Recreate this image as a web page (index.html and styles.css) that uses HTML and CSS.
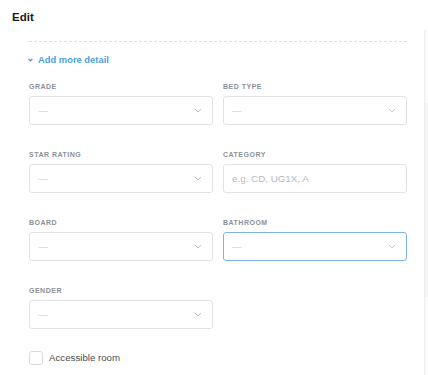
FILE: index.html
```html
<!DOCTYPE html>
<html>
<head>
<meta charset="utf-8">
<link rel="stylesheet" href="styles.css">
</head>
<body>
<div class="page">
  <main class="main">
    <h1 class="title">Edit</h1>
    <div class="content">
      <div class="divider"></div>
      <button class="toggle" type="button">
        <svg class="toggle-icon" width="5" height="4" viewBox="0 0 5 4"><polyline points="0.6,1 2.5,2.8 4.4,1" fill="none" stroke="#4a9fd8" stroke-width="1.2"/></svg>
        <span>Add more detail</span>
      </button>
      <div class="grid">
        <div class="field">
          <div class="label">GRADE</div>
          <div class="box"><span class="dash">—</span><svg class="chev" width="8" height="5" viewBox="0 0 8 5"><polyline points="0.8,0.8 4,4 7.2,0.8" fill="none" stroke="#b9bcc0" stroke-width="0.9"/></svg></div>
        </div>
        <div class="field">
          <div class="label">BED TYPE</div>
          <div class="box"><span class="dash">—</span><svg class="chev" width="8" height="5" viewBox="0 0 8 5"><polyline points="0.8,0.8 4,4 7.2,0.8" fill="none" stroke="#b9bcc0" stroke-width="0.9"/></svg></div>
        </div>
        <div class="field">
          <div class="label">STAR RATING</div>
          <div class="box"><span class="dash">—</span><svg class="chev" width="8" height="5" viewBox="0 0 8 5"><polyline points="0.8,0.8 4,4 7.2,0.8" fill="none" stroke="#b9bcc0" stroke-width="0.9"/></svg></div>
        </div>
        <div class="field">
          <div class="label">CATEGORY</div>
          <div class="box"><span class="placeholder">e.g. CD, UG1X, A</span></div>
        </div>
        <div class="field">
          <div class="label">BOARD</div>
          <div class="box"><span class="dash">—</span><svg class="chev" width="8" height="5" viewBox="0 0 8 5"><polyline points="0.8,0.8 4,4 7.2,0.8" fill="none" stroke="#b9bcc0" stroke-width="0.9"/></svg></div>
        </div>
        <div class="field">
          <div class="label">BATHROOM</div>
          <div class="box focus"><span class="dash">—</span><svg class="chev" width="8" height="5" viewBox="0 0 8 5"><polyline points="0.8,0.8 4,4 7.2,0.8" fill="none" stroke="#b9bcc0" stroke-width="0.9"/></svg></div>
        </div>
        <div class="field">
          <div class="label">GENDER</div>
          <div class="box"><span class="dash">—</span><svg class="chev" width="8" height="5" viewBox="0 0 8 5"><polyline points="0.8,0.8 4,4 7.2,0.8" fill="none" stroke="#b9bcc0" stroke-width="0.9"/></svg></div>
        </div>
      </div>
      <label class="check">
        <span class="checkbox"></span>
        <span class="check-text">Accessible room</span>
      </label>
    </div>
  </main>
  <aside class="rail"><div class="thumb"></div></aside>
</div>
</body>
</html>
```

FILE: styles.css
```css
html, body {
  margin: 0;
  padding: 0;
  background: #ffffff;
}
body {
  font-family: "Liberation Sans", Arial, sans-serif;
  color: #222;
}
.page {
  display: flex;
  width: 428px;
  height: 375px;
  overflow: hidden;
}
.main {
  width: 424px;
  flex: none;
}
.rail {
  flex: 1;
  margin-top: 30px;
  border-left: 1px solid #ececec;
  background: #fbfbfb;
  display: flex;
  flex-direction: column;
}
.thumb {
  margin-top: 73px;
  height: 194px;
  background: #f4f4f4;
}
.title {
  margin: 0;
  padding: 9px 12px 0;
  font-size: 11.5px;
  line-height: 16px;
  font-weight: 700;
  color: #1a1a1a;
}
.content {
  margin-left: 29px;
  width: 378px;
}
.divider {
  margin-top: 16px;
  border-top: 1px dashed #dcdcdc;
}
.toggle {
  display: flex;
  align-items: center;
  gap: 5px;
  margin-top: 11px;
  padding: 0;
  border: 0;
  background: none;
  font-family: inherit;
  font-size: 9.4px;
  line-height: 14px;
  font-weight: 700;
  color: #4a9fd8;
  cursor: pointer;
}
.toggle-icon {
  display: block;
  margin-left: -1px;
}
.grid {
  margin-top: 14px;
  display: grid;
  grid-template-columns: 184px 184px;
  column-gap: 10px;
  row-gap: 24px;
}
.label {
  font-size: 7px;
  line-height: 11px;
  font-weight: 700;
  letter-spacing: 0.5px;
  color: #8b9199;
  margin-bottom: 4px;
}
.box {
  box-sizing: border-box;
  height: 29px;
  border: 1px solid #e2e3e5;
  border-radius: 3px;
  display: flex;
  align-items: center;
  justify-content: space-between;
  padding: 0 10px 0 8px;
}
.box.focus {
  border-color: #7fb6df;
}
.dash {
  font-size: 10px;
  color: #dadbdd;
  transform: scaleX(0.95);
}
.placeholder {
  font-size: 9.8px;
  color: #b7b9bc;
}
.chev {
  display: block;
}
.check {
  margin-top: 22px;
  display: flex;
  align-items: center;
  gap: 6px;
}
.checkbox {
  box-sizing: border-box;
  width: 14px;
  height: 14px;
  border: 1px solid #d9dadc;
  border-radius: 3px;
  background: #fff;
}
.check-text {
  font-size: 9.7px;
  line-height: 14px;
  color: #4a4d52;
}
```
